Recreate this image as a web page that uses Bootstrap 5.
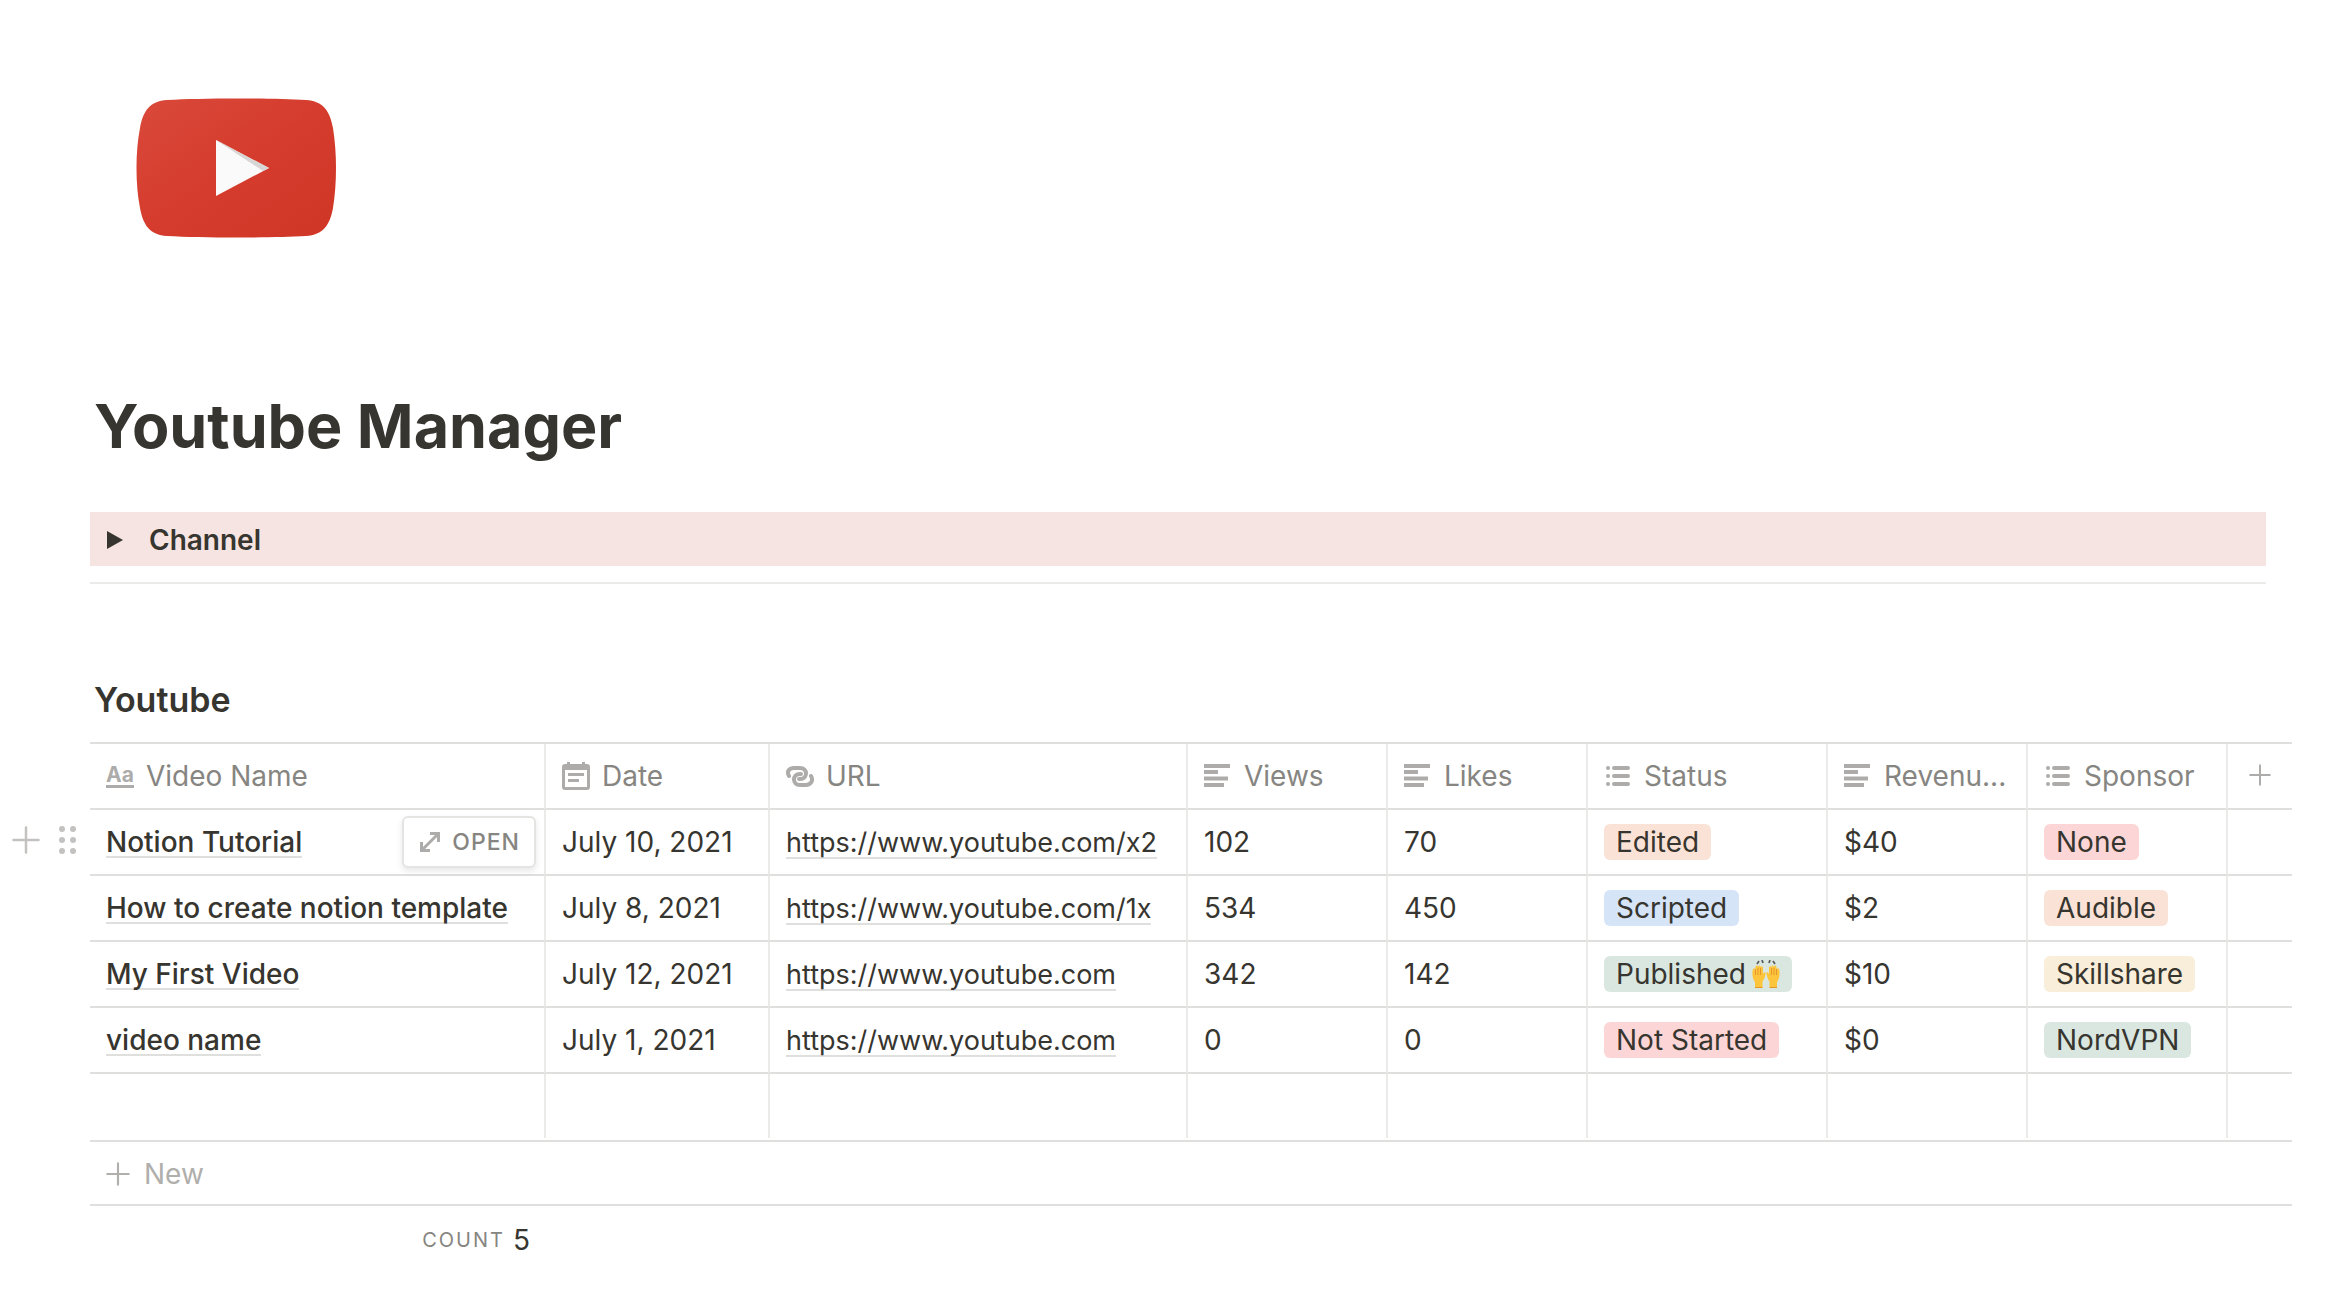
<!DOCTYPE html>
<html lang="en">
<head>
<meta charset="utf-8">
<meta name="viewport" content="width=device-width, initial-scale=1">
<title>Youtube Manager</title>
<link href="https://cdn.jsdelivr.net/npm/bootstrap@5.3.0/dist/css/bootstrap.min.css" rel="stylesheet">
<style>
  :root { --ink: #37352f; --muted: #868581; --glyph: #adacaa; --line: #dfdfde; --line-soft: #ebebea; }
  body { font-family: Inter, "Liberation Sans", sans-serif; font-size: 28px; line-height: 36px; color: var(--ink); background: #fff; }
  .page-main { padding: 60px 58px 40px 90px; }
  .page-head { padding-right: 26px; }
  .page-logo { width: 292px; height: 216px; }
  .page-title { font-size: 61px; line-height: 76px; font-weight: 700; padding-left: 4px; margin: 112px 0 48px; }
  .toggle-block { background: #f6e4e2; height: 54px; border: 0; font-weight: 600; color: var(--ink); padding: 2px 0 0 16px; gap: 26px; }
  .page-rule { border: 0; border-top: 2px solid var(--line-soft); opacity: 1; margin: 16px 0 94px; }
  .db-title { font-size: 34px; line-height: 44px; font-weight: 600; padding-left: 4px; margin: 0 0 20px; }
  .db-grid { table-layout: fixed; border-collapse: separate; border-spacing: 0; border-top: 2px solid var(--line); }
  .db-grid th, .db-grid td { height: 66px; padding: 0 8px 0 16px; border-bottom: 2px solid var(--line); border-right: 2px solid var(--line-soft); vertical-align: middle; font-weight: 400; white-space: nowrap; }
  .db-grid th { color: var(--muted); }
  .db-grid th:last-child, .db-grid td:last-child { border-right: 0; padding: 0; }
  .db-grid tr.blank-row td { height: 64px; border-bottom: 0; }
  .w-name { width: 456px; } .w-date { width: 224px; } .w-url { width: 418px; } .w-std { width: 200px; } .w-status { width: 240px; }
  .head-cell { gap: 12px; }
  .head-cell svg, .head-cell .aa-icon { width: 28px; flex: none; color: var(--glyph); }
  .aa-icon { font-size: 21px; line-height: 21px; font-weight: 700; border-bottom: 3px solid currentColor; }
  .cell-link { color: var(--ink); text-decoration: none; display: inline-block; line-height: 28px; box-shadow: 0 2px 0 var(--line); }
  .cell-name { font-weight: 500; }
  .cell-url { font-size: 27px; }
  .tag { display: inline-flex; align-items: center; gap: 6px; height: 36px; padding: 0 12px; border-radius: 6px; }
  .tag-orange { background: #fae3d6; } .tag-blue { background: #d6e4f7; } .tag-green { background: #dae7e1; }
  .tag-red { background: #fcd6d6; } .tag-yellow { background: #f8eed9; }
  .plain-btn { background: none; border: 0; padding: 0; color: var(--glyph); display: inline-flex; align-items: center; }
  .row-tools .plain-btn { color: #c3c2c0; }
  .open-btn { height: 52px; padding: 0 14px 0 16px; gap: 12px; border: 2px solid #e4e4e3; border-radius: 6px; background: #fff; color: var(--muted); font-size: 23px; font-weight: 500; letter-spacing: 1px; box-shadow: 0 3px 6px rgba(15,15,15,.1); }
  .row-tools { left: -78px; top: 16px; gap: 19px; }
  .new-row { margin-top: 2px; height: 66px; padding: 2px 0 0 16px; border-top: 2px solid var(--line); border-bottom: 2px solid var(--line); }
  .new-row .plain-btn { gap: 14px; color: #b0afac; }
  .count-row { width: 456px; height: 68px; padding-right: 16px; gap: 8px; }
  .count-label { font-size: 20px; letter-spacing: 2px; color: var(--muted); }
</style>
</head>
<body>
<svg class="d-none" aria-hidden="true">
  <symbol id="i-text" viewBox="0 0 28 28"><path fill="currentColor" d="M0 2h26v4H0zM0 8h14v4H0zM0 14.500h24v4H0zM0 21h20v4H0z"/></symbol>
  <symbol id="i-list" viewBox="0 0 28 28"><g stroke="currentColor" stroke-width="4" stroke-linecap="round"><path d="M10 6h14M10 14h14M10 22h14M4 6h.01M4 14h.01M4 22h.01"/></g></symbol>
  <symbol id="i-date" viewBox="0 0 28 28"><path fill="currentColor" fill-rule="evenodd" d="M5 0h3v2h12V0h3v2h2a3 3 0 0 1 3 3v20a3 3 0 0 1-3 3H3a3 3 0 0 1-3-3V5a3 3 0 0 1 3-3h2zM3 8v17h22V8zM6 11h16v3H6zM6 17h11v3H6z"/></symbol>
  <symbol id="i-plus" viewBox="0 0 28 28"><path stroke="currentColor" stroke-width="2.500" stroke-linecap="round" d="M14 1.500v25M1.500 14h25"/></symbol>
</svg>
<main class="page-main">
  <header class="page-head">
    <svg class="page-logo d-block" viewBox="90 60 292 216" role="img" aria-label="Youtube logo">
      <defs><linearGradient id="red" x1="0" y1="0" x2="1" y2="1"><stop offset="0" stop-color="#d9493a"/><stop offset=".5" stop-color="#d53c2d"/><stop offset="1" stop-color="#d03626"/></linearGradient></defs>
      <path fill="url(#red)" d="M236 98.500C262 98.500 288 99 306 100C323 101 330 111 333 128C335 141 336 154 336 168S335 195 333 208C330 225 323 235 306 236C288 237 262 237.500 236 237.500S185 237 167 236C150 235 143 225 140 208C137.500 195 136.500 182 136.500 168S137.500 141 140 128C143 111 150 101 167 100C185 99 210 98.500 236 98.500z"/>
      <path fill="#fafafa" d="M216 140v56l53-28z"/><path fill="#d8d6d5" d="M216 140l47 31 6-3z"/>
    </svg>
    <h1 class="page-title">Youtube Manager</h1>
    <button type="button" class="toggle-block w-100 d-flex align-items-center" aria-expanded="false">
      <svg width="17" height="18" viewBox="0 0 17 18" aria-hidden="true"><path fill="currentColor" d="M1 0l16 9-16 9z"/></svg>
      <span>Channel</span>
    </button>
    <hr class="page-rule">
  </header>
  <section>
    <h2 class="db-title">Youtube</h2>
    <table class="db-grid w-100">
      <colgroup><col class="w-name"><col class="w-date"><col class="w-url"><col class="w-std"><col class="w-std"><col class="w-status"><col class="w-std"><col class="w-std"><col></colgroup>
      <thead>
        <tr>
          <th scope="col"><div class="head-cell d-flex align-items-center"><span class="aa-icon" aria-hidden="true">Aa</span>Video Name</div></th>
          <th scope="col"><div class="head-cell d-flex align-items-center"><svg height="28"><use href="#i-date"/></svg>Date</div></th>
          <th scope="col"><div class="head-cell d-flex align-items-center"><svg height="28" viewBox="0 0 28 28"><g fill="none" stroke="currentColor" stroke-width="4" stroke-linecap="round"><path d="M3 14C0 9 4 6 8 6h6c8 0 8 11 0 11h-1"/><path d="M25 14c3 5-1 9-5 9h-6c-8 0-8-11 0-11h1"/></g></svg>URL</div></th>
          <th scope="col"><div class="head-cell d-flex align-items-center"><svg height="28"><use href="#i-text"/></svg>Views</div></th>
          <th scope="col"><div class="head-cell d-flex align-items-center"><svg height="28"><use href="#i-text"/></svg>Likes</div></th>
          <th scope="col"><div class="head-cell d-flex align-items-center"><svg height="28"><use href="#i-list"/></svg>Status</div></th>
          <th scope="col"><div class="head-cell d-flex align-items-center"><svg height="28"><use href="#i-text"/></svg>Revenu...</div></th>
          <th scope="col"><div class="head-cell d-flex align-items-center"><svg height="28"><use href="#i-list"/></svg>Sponsor</div></th>
          <th scope="col" class="text-center"><button type="button" class="plain-btn" aria-label="Add column"><svg width="22" height="22"><use href="#i-plus"/></svg></button></th>
        </tr>
      </thead>
      <tbody>
        <tr>
          <td class="position-relative">
            <div class="row-tools position-absolute d-flex align-items-center">
              <button type="button" class="plain-btn" aria-label="Add row"><svg width="28" height="28"><use href="#i-plus"/></svg></button>
              <button type="button" class="plain-btn" aria-label="Drag row"><svg width="18" height="28" viewBox="0 0 18 28"><g fill="currentColor"><circle cx="3" cy="3" r="3"/><circle cx="14" cy="3" r="3"/><circle cx="3" cy="14" r="3"/><circle cx="14" cy="14" r="3"/><circle cx="3" cy="25" r="3"/><circle cx="14" cy="25" r="3"/></g></svg></button>
            </div>
            <div class="d-flex align-items-center justify-content-between"><a class="cell-link cell-name" href="#">Notion Tutorial</a>
              <button type="button" class="open-btn d-flex align-items-center"><svg width="20" height="20" viewBox="0 0 20 20" aria-hidden="true"><path fill="none" stroke="#adacaa" stroke-width="3" d="M10 1.500h8.500V10M18.500 1.500l-17 17M1.500 10v8.500H10"/></svg>OPEN</button></div>
          </td>
          <td>July 10, 2021</td><td><a class="cell-link cell-url" href="#">https://www.youtube.com/x2</a></td><td>102</td><td>70</td>
          <td><span class="tag tag-orange">Edited</span></td><td>$40</td><td><span class="tag tag-red">None</span></td><td></td>
        </tr>
        <tr>
          <td><a class="cell-link cell-name" href="#">How to create notion template</a></td>
          <td>July 8, 2021</td><td><a class="cell-link cell-url" href="#">https://www.youtube.com/1x</a></td><td>534</td><td>450</td>
          <td><span class="tag tag-blue">Scripted</span></td><td>$2</td><td><span class="tag tag-orange">Audible</span></td><td></td>
        </tr>
        <tr>
          <td><a class="cell-link cell-name" href="#">My First Video</a></td>
          <td>July 12, 2021</td><td><a class="cell-link cell-url" href="#">https://www.youtube.com</a></td><td>342</td><td>142</td>
          <td><span class="tag tag-green">Published
            <svg width="28" height="28" viewBox="0 0 28 28" role="img" aria-label="Raising hands"><g stroke="#5c5f5d" stroke-width="1.800"><path d="M5 4l2-3M10 0l1 3M18 0l-1 3M23 4l-2-3"/></g><path id="hand" fill="#fcc53b" d="M3 28v-6C0 18 0 12 1 9c1-1.500 2.500-.5 2.500 1V7c.5-2 2.500-2 2.500 0 .5-2 2.500-2 2.500 0 1-1.500 2.500-.5 2.500 1v6c1-2.500 3-2 2.500 0-.5 3-1.500 6-3 7.500V28z"/><use href="#hand" transform="matrix(-1 0 0 1 28 0)"/><path stroke="#e8952c" fill="none" d="M3.500 9v6M6 8v7M8.500 8v7M24.500 9v6M22 8v7M19.500 8v7M3 27.500h7.500M17.500 27.500H25"/></svg></span></td><td>$10</td><td><span class="tag tag-yellow">Skillshare</span></td><td></td>
        </tr>
        <tr>
          <td><a class="cell-link cell-name" href="#">video name</a></td>
          <td>July 1, 2021</td><td><a class="cell-link cell-url" href="#">https://www.youtube.com</a></td><td>0</td><td>0</td>
          <td><span class="tag tag-red">Not Started</span></td><td>$0</td><td><span class="tag tag-green">NordVPN</span></td><td></td>
        </tr>
        <tr class="blank-row"><td></td><td></td><td></td><td></td><td></td><td></td><td></td><td></td><td></td></tr>
      </tbody>
    </table>
    <div class="new-row d-flex align-items-center"><button type="button" class="plain-btn"><svg width="24" height="24"><use href="#i-plus"/></svg>New</button></div>
    <div class="count-row d-flex align-items-center justify-content-end"><span class="count-label">COUNT</span><span>5</span></div>
  </section>
</main>
<script src="https://cdn.jsdelivr.net/npm/bootstrap@5.3.0/dist/js/bootstrap.bundle.min.js"></script>
</body>
</html>
